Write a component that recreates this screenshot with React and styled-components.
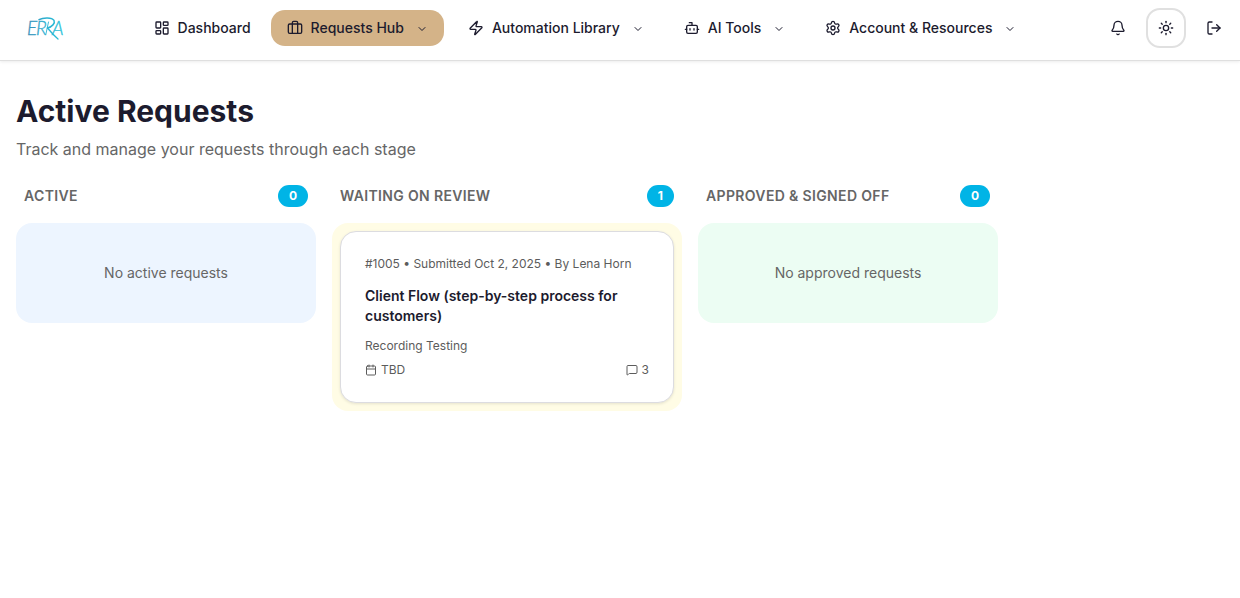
import React from "react";
import styled, { createGlobalStyle, css } from "styled-components";
import {
  LayoutDashboard,
  Briefcase,
  Zap,
  Bot,
  Settings,
  ChevronDown,
  Bell,
  Sun,
  LogOut,
  Calendar,
  MessageSquare,
} from "lucide-react";

const GlobalStyle = createGlobalStyle`
  *, *::before, *::after { box-sizing: border-box; }
  body {
    margin: 0;
    background: #fff;
    color: #1c1b2e;
    font-family: Inter, "Liberation Sans", sans-serif;
    font-size: 14px;
    line-height: 20px;
  }
  h1, h2, h3, p { margin: 0; }
`;

const Header = styled.header`
  display: flex;
  align-items: flex-start;
  justify-content: space-between;
  height: 61px;
  padding: 8px 6px 0 16px;
  background: #fff;
  border-bottom: 1px solid #dfdfdf;
  box-shadow: 0 1px 3px rgba(0, 0, 0, 0.08);
`;

const LogoLink = styled.a`
  display: flex;
  align-items: center;
  width: 56px;
  height: 40px;
`;

const Nav = styled.nav`
  display: flex;
  align-items: center;
  gap: 8px;
  height: 40px;
`;

const navItem = css`
  display: inline-flex;
  align-items: center;
  gap: 8px;
  height: 36px;
  padding: 0 16px;
  border: 0;
  border-radius: 14px;
  background: ${(p) => (p.$active ? "#d4b388" : "transparent")};
  color: #1c1b2e;
  font: 500 14px/20px Inter, "Liberation Sans", sans-serif;
  text-decoration: none;
  white-space: nowrap;
  cursor: pointer;
`;

const NavLink = styled.a`
  ${navItem}
  margin-right: -4px;
`;

const NavButton = styled.button`
  ${navItem}
`;

const Chevron = styled(ChevronDown)`
  margin: 2px 0 0 4px;
`;

const Actions = styled.div`
  display: flex;
  gap: 8px;
`;

const IconButton = styled.button`
  display: grid;
  place-items: center;
  width: 40px;
  height: 40px;
  padding: 0;
  border: 2px solid ${(p) => (p.$outlined ? "#e0e0e0" : "transparent")};
  border-radius: 14px;
  background: transparent;
  color: #1c1b2e;
  cursor: pointer;
`;

const Main = styled.main`
  padding: 32px 16px;
`;

const Title = styled.h1`
  font-size: 30px;
  font-weight: 700;
  line-height: 36px;
`;

const Subtitle = styled.p`
  margin-top: 8px;
  color: #666;
  font-size: 16px;
  line-height: 24px;
`;

const Board = styled.div`
  display: flex;
  align-items: flex-start;
  gap: 16px;
  margin-top: 24px;
`;

const Column = styled.section`
  min-width: 300px;
  max-width: 350px;
`;

const ColumnHeader = styled.div`
  display: flex;
  align-items: center;
  justify-content: space-between;
  padding: 0 8px;
  margin-bottom: 16px;
`;

const ColumnTitle = styled.h2`
  color: #666;
  font-size: 14px;
  font-weight: 600;
  line-height: 20px;
  letter-spacing: 0.025em;
  text-transform: uppercase;
`;

const Count = styled.span`
  padding: 3px 11px;
  border-radius: 12px;
  background: #00b4e6;
  color: #fff;
  font-size: 12px;
  font-weight: 700;
  line-height: 16px;
`;

const Lane = styled.div`
  min-height: 100px;
  padding: 8px;
  border-radius: 16px;
  background: ${(p) => p.$tint};
`;

const Empty = styled.p`
  padding: 32px 0;
  color: #666;
  text-align: center;
`;

const Card = styled.article`
  padding: 24px;
  border: 1px solid #dcdce0;
  border-radius: 16px;
  background: #fff;
  box-shadow: 0 1px 3px rgba(0, 0, 0, 0.1);
  color: #5c5c5c;
  font-size: 12px;
  line-height: 16px;
`;

const CardTitle = styled.h3`
  margin: 14px 0 12px;
  color: #1c1b2e;
  font-size: 14px;
  font-weight: 600;
  line-height: 20px;
`;

const CardFooter = styled.div`
  display: flex;
  justify-content: space-between;
  margin-top: 8px;
`;

const Stat = styled.span`
  display: inline-flex;
  align-items: center;
  gap: 4px;
`;

function Logo() {
  return (
    <svg width="56" height="40" viewBox="0 0 56 40" role="img" aria-label="ERRA">
      <defs>
        <linearGradient id="ink" gradientUnits="userSpaceOnUse" x1="11" y1="0" x2="48" y2="0">
          <stop offset="0" stopColor="#3a8fb8" />
          <stop offset="0.5" stopColor="#2bb0d0" />
          <stop offset="1" stopColor="#27c2d8" />
        </linearGradient>
      </defs>
      <g
        fill="url(#ink)"
        stroke="url(#ink)"
        strokeWidth="0.3"
        fontFamily="Lato, sans-serif"
        fontWeight="300"
        fontSize="19"
        fontStyle="italic"
      >
        <text x="11" y="27">E</text>
        <text x="20" y="27">R</text>
        <text x="36" y="27">A</text>
      </g>
      <g fill="none" stroke="url(#ink)" strokeLinecap="round">
        <path d="M23 11.6C27 9.4 36 9 38 12.4C39.4 15.4 36 18.8 31.5 20" strokeWidth="1.5" />
        <path d="M31.5 20C34 23 38 27.5 42 31" strokeWidth="1.3" />
        <path d="M32.5 14L29.8 26.6" strokeWidth="0.9" />
      </g>
    </svg>
  );
}

const menus = [
  { label: "Requests Hub", icon: Briefcase, active: true },
  { label: "Automation Library", icon: Zap },
  { label: "AI Tools", icon: Bot },
  { label: "Account & Resources", icon: Settings },
];

function BoardColumn({ title, count, tint, children }) {
  return (
    <Column>
      <ColumnHeader>
        <ColumnTitle>{title}</ColumnTitle>
        <Count>{count}</Count>
      </ColumnHeader>
      <Lane $tint={tint}>{children}</Lane>
    </Column>
  );
}

export default function App() {
  return (
    <>
      <GlobalStyle />
      <Header>
        <LogoLink href="#home">
          <Logo />
        </LogoLink>
        <Nav aria-label="Main">
          <NavLink href="#dashboard">
            <LayoutDashboard size={16} />
            Dashboard
          </NavLink>
          {menus.map(({ label, icon: Icon, active }) => (
            <NavButton key={label} type="button" $active={active} aria-haspopup="menu">
              <Icon size={16} />
              {label}
              <Chevron size={12} />
            </NavButton>
          ))}
        </Nav>
        <Actions>
          <IconButton type="button" aria-label="Notifications">
            <Bell size={16} />
          </IconButton>
          <IconButton type="button" aria-label="Toggle theme" $outlined>
            <Sun size={16} />
          </IconButton>
          <IconButton type="button" aria-label="Log out">
            <LogOut size={16} />
          </IconButton>
        </Actions>
      </Header>
      <Main>
        <Title>Active Requests</Title>
        <Subtitle>Track and manage your requests through each stage</Subtitle>
        <Board>
          <BoardColumn title="Active" count={0} tint="#edf5ff">
            <Empty>No active requests</Empty>
          </BoardColumn>
          <BoardColumn title="Waiting on Review" count={1} tint="#fffce5">
            <Card>
              <p>#1005 • Submitted Oct 2, 2025 • By Lena Horn</p>
              <CardTitle>Client Flow (step-by-step process for customers)</CardTitle>
              <p>Recording Testing</p>
              <CardFooter>
                <Stat>
                  <Calendar size={12} />
                  TBD
                </Stat>
                <Stat>
                  <MessageSquare size={12} />3
                </Stat>
              </CardFooter>
            </Card>
          </BoardColumn>
          <BoardColumn title="Approved & Signed Off" count={0} tint="#ecfdf3">
            <Empty>No approved requests</Empty>
          </BoardColumn>
        </Board>
      </Main>
    </>
  );
}
